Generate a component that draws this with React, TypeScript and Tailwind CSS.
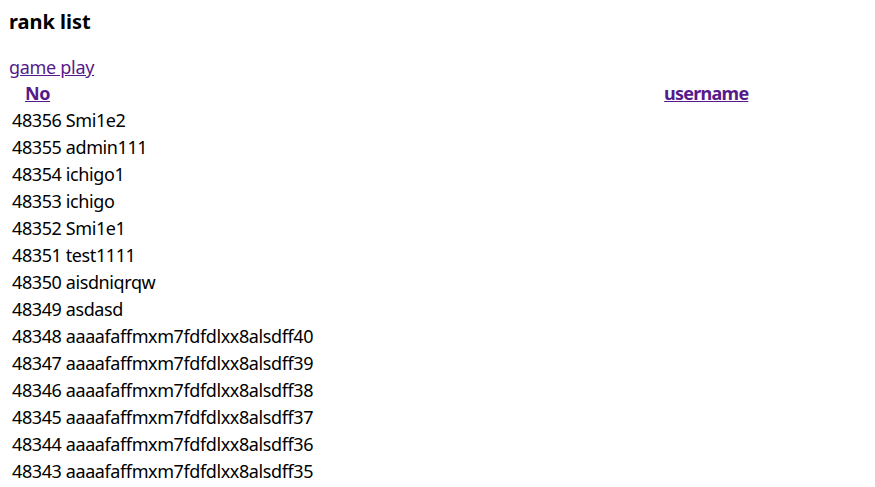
import React from "react";

const rows: [string, string][] = [
  ["48356", "Smi1e2"],
  ["48355", "admin111"],
  ["48354", "ichigo1"],
  ["48353", "ichigo"],
  ["48352", "Smi1e1"],
  ["48351", "test1111"],
  ["48350", "aisdniqrqw"],
  ["48349", "asdasd"],
  ["48348", "aaaafaffmxm7fdfdlxx8alsdff40"],
  ["48347", "aaaafaffmxm7fdfdlxx8alsdff39"],
  ["48346", "aaaafaffmxm7fdfdlxx8alsdff38"],
  ["48345", "aaaafaffmxm7fdfdlxx8alsdff37"],
  ["48344", "aaaafaffmxm7fdfdlxx8alsdff36"],
  ["48343", "aaaafaffmxm7fdfdlxx8alsdff35"],
];

export default function App() {
  return (
    <div
      className="w-[875px] h-[487px] overflow-hidden bg-white text-black pl-[9px]"
      style={{ fontFamily: '"Noto Sans", "Open Sans", sans-serif' }}
    >
      <h1 className="pt-[8px] text-[20px] font-bold leading-[28px]">rank list</h1>
      <a href="#" className="mt-[18px] block w-fit text-[18px] leading-[26px] tracking-[-0.3px] text-[#551a8b] underline">
        game play
      </a>
      <div className="flex h-[26px] items-center text-[18px] font-bold">
        <a href="#" className="ml-[16px] text-[#551a8b] underline leading-[26px] tracking-[-0.4px]">No</a>
        <a href="#" className="ml-[614px] text-[#551a8b] underline leading-[26px] tracking-[-0.75px]">username</a>
      </div>
      <div className="flex flex-col pl-[3px] pt-[1px]">
        {rows.map(([n, u]) => (
          <div key={n} className="h-[27px] text-[18px] leading-[27px] tracking-[-0.4px] whitespace-nowrap">
            {n} {u}
          </div>
        ))}
      </div>
    </div>
  );
}
